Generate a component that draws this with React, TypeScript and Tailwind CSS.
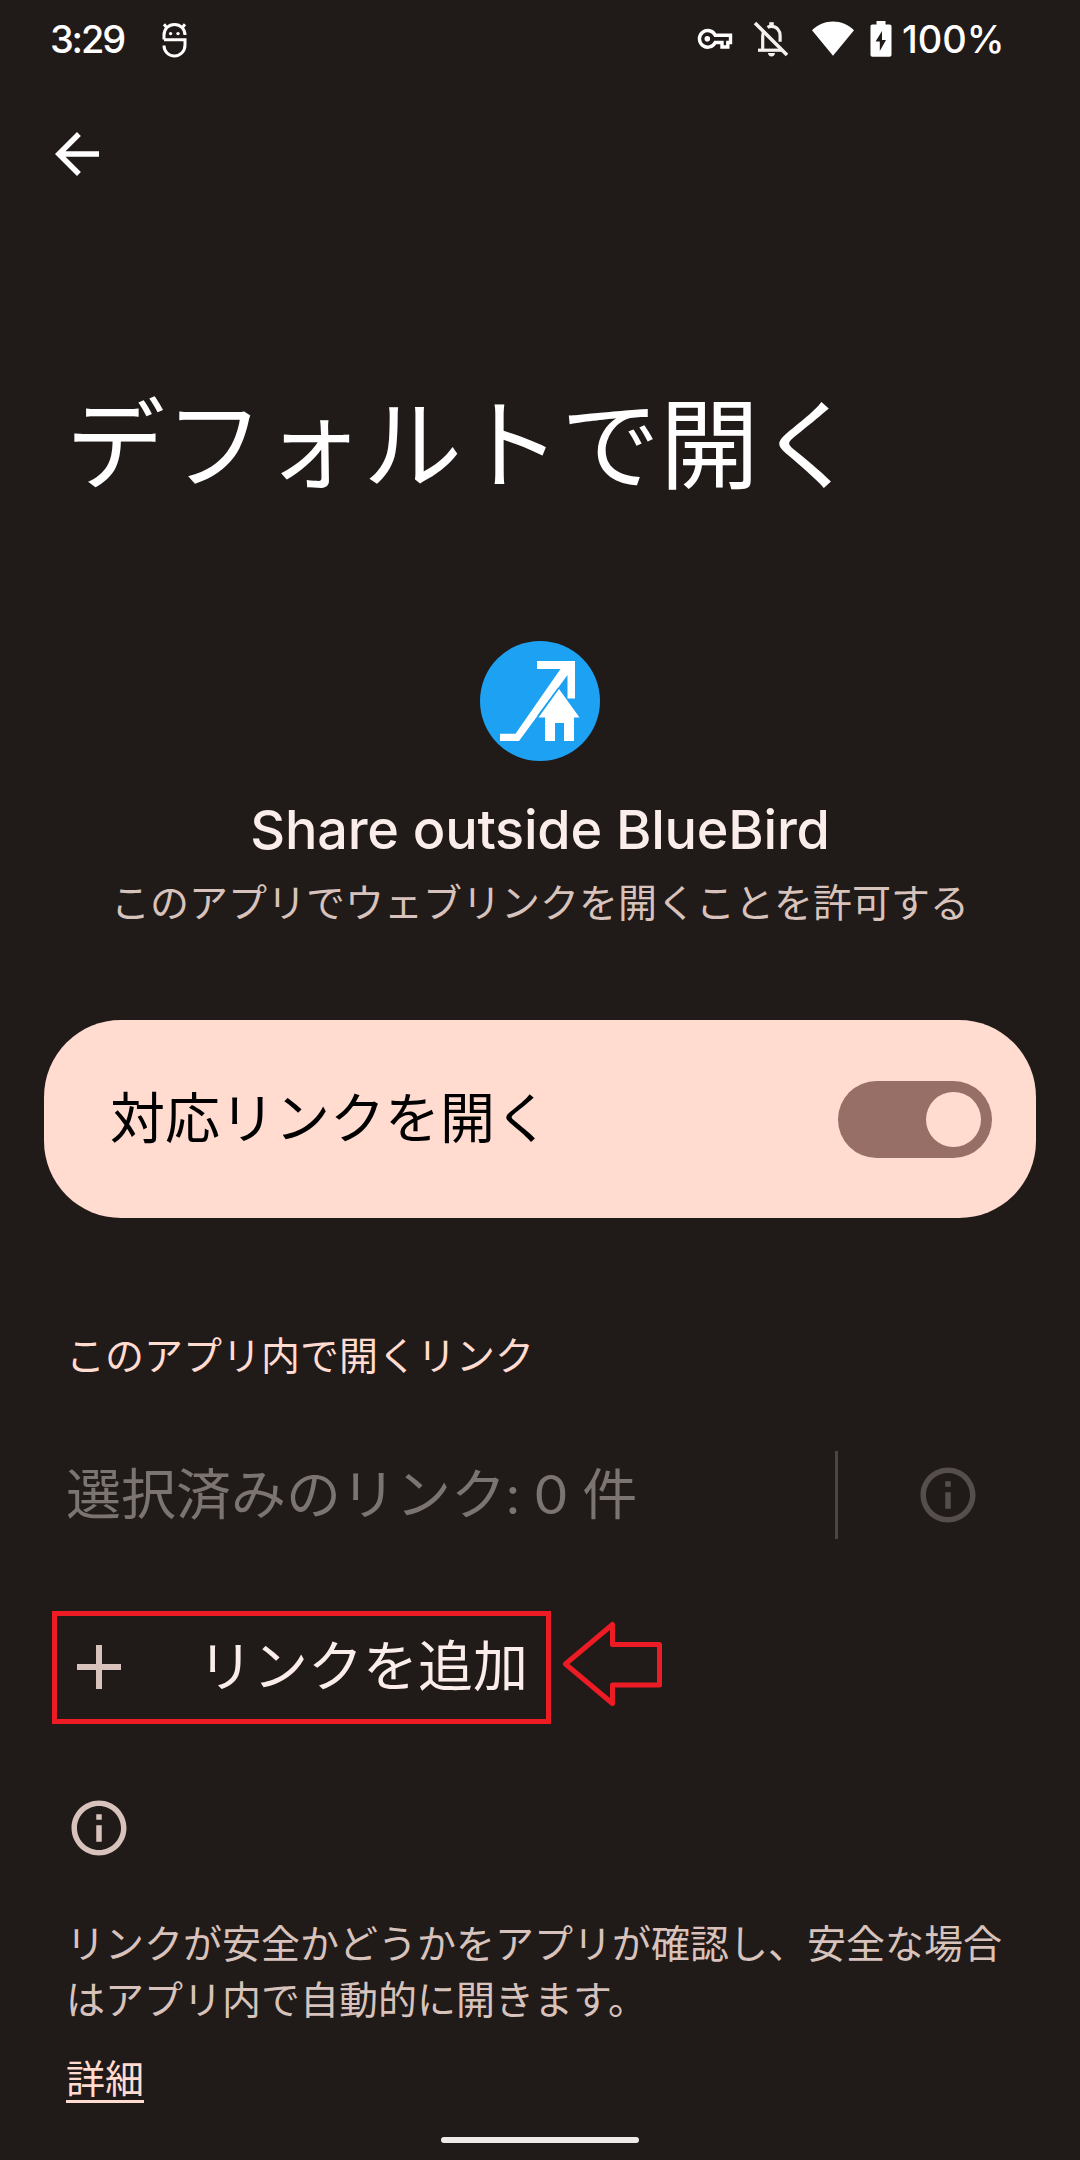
import type { ReactNode } from "react";

function DaemonIcon() {
  return (
    <svg width="25" height="36" viewBox="0 0 25 36" fill="none" stroke="#fff" strokeWidth="3">
      <path d="M2 17.5V13C2 7 6.5 2.6 12.5 2.6S23 7 23 13M2 2.2l3.6 4.4M23 2.2l-3.6 4.4" />
      <path d="M2 17.8h21V23c0 6.2-4.6 11-10.5 11S2 29.600 2 23.500" />
      <circle cx="8.600" cy="11.600" r="1.700" fill="#fff" stroke="none" />
      <circle cx="16" cy="11.600" r="1.700" fill="#fff" stroke="none" />
    </svg>
  );
}

function KeyIcon() {
  return (
    <svg width="36" height="22" viewBox="0 0 36 22" fill="none" stroke="#fff" strokeWidth="3.400">
      <path d="M18.200 7.200H33.500V14.500H30.800V19H25V14.500H18.200A8.300 8.300 0 1 1 18.200 7.200Z" />
      <circle cx="10.300" cy="10.800" r="2.800" fill="#fff" stroke="none" />
    </svg>
  );
}

function BellOffIcon() {
  return (
    <svg width="36" height="38" viewBox="0 0 36 38" fill="none" stroke="#f4f2f1" strokeWidth="3.200">
      <path d="M2 3L34 35" strokeWidth="3.600" />
      <path d="M5 30.200h24" />
      <path d="M9.700 30V16c0-2 .5-4 1.500-5.500" />
      <path d="M14.500 7.300c1.200-.7 2.600-1 4-1 5 0 8.600 4.200 8.600 9.400v6" />
      <path d="M18.500 7V2.200" strokeWidth="4.500" />
      <path d="M15 33h7c0 2-1.500 3.400-3.500 3.400S15 35 15 33Z" fill="#f4f2f1" stroke="none" />
    </svg>
  );
}

function WifiIcon() {
  return (
    <svg width="42" height="35" viewBox="0 0 42 35">
      <path d="M0 9.200C5.800 3.600 13 .4 21 .4s15.200 3.200 21 8.800L21 34.700Z" fill="#fff" />
    </svg>
  );
}

function BatteryIcon() {
  return (
    <svg width="22" height="36" viewBox="0 0 22 36">
      <path
        fillRule="evenodd"
        d="M6.500 0h9v3.500h4.200c1 0 1.800.8 1.800 1.800v28.400c0 1.200-.8 2-2 2h-17c-1.200 0-2-.8-2-2V5.300c0-1 .8-1.800 1.800-1.800h4.200ZM12 10L5.600 20.600h4.200V30l6.200-11h-4Z"
        fill="#fff"
      />
    </svg>
  );
}

function InfoIcon() {
  return (
    <svg className="block size-[66px]" viewBox="0 0 24 24" fill="currentColor">
      <path d="M11 7h2v2h-2zm0 4h2v6h-2zm1-9C6.480 2 2 6.480 2 12s4.480 10 10 10 10-4.480 10-10S17.520 2 12 2zm0 18c-4.410 0-8-3.590-8-8s3.590-8 8-8 8 3.590 8 8-3.590 8-8 8z" />
    </svg>
  );
}

function AppIcon() {
  return (
    <svg className="block size-[120px]" viewBox="0 0 120 120">
      <circle cx="60" cy="60" r="60" fill="#1da1f2" />
      <path d="M57 20h38v37.500h-7.500V34L39 100H20v-7.300h15.500L80.500 28H57Z" fill="#fff" />
      <path d="M58.200 75L78.500 47.500" stroke="#1da1f2" strokeWidth="2" />
      <path d="M79 48L99.500 76.500H94V100H84V82h-9v18H65V76.500h-6.500Z" fill="#fff" />
    </svg>
  );
}

function StatusBar() {
  return (
    <header className="flex h-[77px] items-center pl-[50px] text-white">
      <span className="w-[112px] font-['Inter'] text-[38px] leading-none font-medium tracking-[-2.2px]">3:29</span>
      <div className="mt-[2px]">
        <DaemonIcon />
      </div>
      <div className="ml-[510px] flex items-center">
        <KeyIcon />
        <div className="ml-[20px]">
          <BellOffIcon />
        </div>
        <div className="ml-[23px]">
          <WifiIcon />
        </div>
        <div className="ml-[16px] mt-[1px]">
          <BatteryIcon />
        </div>
      </div>
      <span className="ml-[10px] font-['Inter'] text-[38px] leading-none font-medium">100%</span>
    </header>
  );
}

function Latin({ children }: { children: ReactNode }) {
  return <span className="font-['Lato'] tracking-[0.6px]">{children}</span>;
}

export default function App() {
  return (
    <div className="flex h-[2160px] w-[1080px] flex-col overflow-hidden bg-[#201a18] font-['Noto_Sans_CJK_JP',sans-serif] text-[#fbeeea]">
      <StatusBar />

      <nav className="flex h-[154px] items-center pl-[44px]">
        <button aria-label="戻る">
          <svg className="block size-[66px]" viewBox="0 0 24 24" fill="#fff">
            <path d="M20 11H7.830l5.590-5.590L12 4l-8 8 8 8 1.410-1.410L7.830 13H20v-2z" />
          </svg>
        </button>
      </nav>

      <h1 className="mt-[147px] h-[122px] pl-[66px] text-[99px] leading-[120px] whitespace-nowrap text-white">
        デフォルトで開く
      </h1>

      <section className="mt-[141px] flex h-[379px] flex-col items-center">
        <AppIcon />
        <h2 className="mt-[34px] h-[69px] font-['Inter'] text-[54px] leading-[70px] font-medium tracking-[-0.25px] whitespace-nowrap">
          Share outside BlueBird
        </h2>
        <p className="mt-[8px] h-[56px] text-[39px] leading-[56px] whitespace-nowrap text-[#d8c2bc]">
          このアプリでウェブリンクを開くことを許可する
        </p>
      </section>

      <section className="mx-[44px] flex h-[198px] shrink-0 items-center justify-between rounded-[77px] bg-[#ffdbd0] pr-[44px] pl-[66px]">
        <span className="-mt-[10px] text-[55px] leading-[80px] text-black">対応リンクを開く</span>
        <span
          role="switch"
          aria-checked="true"
          className="flex h-[77px] w-[154px] items-center justify-end rounded-full bg-[#976f66] pr-[11px]"
        >
          <span className="size-[55px] rounded-full bg-[#ffdbd0]" />
        </span>
      </section>

      <h3 className="mt-[107px] h-[57px] pl-[66px] text-[39px] leading-[56px] text-[#ffdbd0]">
        このアプリ内で開くリンク
      </h3>

      <div className="mt-[69px] flex h-[88px] items-center pl-[66px]">
        <span className="-mt-[7px] w-[769px] text-[55px] leading-[80px] whitespace-nowrap text-[#7c7470]">
          選択済みのリンク<Latin>: 0 </Latin>件
        </span>
        <span className="h-[88px] w-[3px] bg-[#4c4543]" />
        <span className="ml-[77px] text-[#564e4c]">
          <InfoIcon />
        </span>
      </div>

      <div className="mt-[72px] ml-[52px] flex h-[113px] items-center">
        <div className="flex h-[113px] w-[499px] items-center border-[5px] border-[#ed1c24] pl-[20px]">
          <svg className="-mt-px block" width="44" height="44" viewBox="0 0 44 44">
            <path d="M22 0V44M0 22H44" stroke="#d8c2bc" strokeWidth="6" />
          </svg>
          <span className="-mt-[11px] ml-[77px] text-[55px] leading-[80px] whitespace-nowrap">リンクを追加</span>
        </div>
        <svg className="-mt-[7px] ml-[11px] block" width="102" height="88" viewBox="0 0 102 88">
          <path
            d="M3.500 44L50.500 4.500V24.500H97.500V65H50.500V83.500Z"
            fill="none"
            stroke="#ed1c24"
            strokeWidth="5"
            strokeLinejoin="round"
          />
        </svg>
      </div>

      <footer className="mt-[71px] flex flex-col items-start pl-[66px] text-[39px] leading-[56px] text-[#d8c2bc]">
        <InfoIcon />
        <p className="mt-[52px] whitespace-nowrap">
          リンクが安全かどうかをアプリが確認し、安全な場合
          <br />
          はアプリ内で自動的に開きます。
        </p>
        <a className="mt-[23px] block h-[55px] border-b-[3px] border-[#ffdbd0] text-[#ffdbd0]">詳細</a>
      </footer>

      <div className="mt-[34px] h-[6px] w-[198px] shrink-0 self-center rounded-full bg-[#edeae8]" />
    </div>
  );
}
